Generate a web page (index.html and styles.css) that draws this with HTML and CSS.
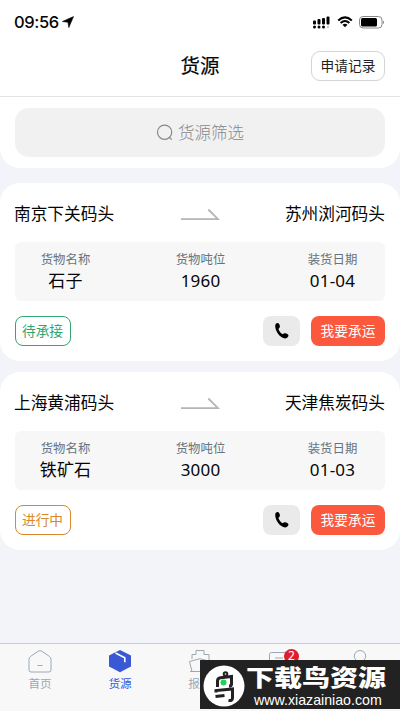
FILE: index.html
```html
<!DOCTYPE html>
<html lang="zh-CN">
<head>
<meta charset="utf-8">
<meta name="viewport" content="width=device-width, initial-scale=1">
<title>货源</title>
<link rel="stylesheet" href="styles.css">
</head>
<body>
<div class="app">
  <header class="top">
    <div class="status">
      <div class="clock"><span>09:56</span>
        <svg class="locate" viewBox="0 0 12 12"><path d="M11.500.6 6.800 11.600 6 6.300.4 5.500z" stroke="#000" stroke-width=".6"/></svg>
      </div>
      <div class="signals">
        <svg width="17" height="13" viewBox="0 0 17 13"><rect y="4.500" width="3" height="4" rx="1"/><rect x="4.500" y="3" width="3" height="5.500" rx="1"/><rect x="9" y="2" width="3" height="6.500" rx="1"/><rect x="13.500" y=".5" width="3" height="8" rx="1"/><circle cx="1.500" cy="11" r="1.500"/><circle cx="6" cy="11" r="1.500"/><circle cx="10.500" cy="11" r="1.500"/><circle cx="15" cy="11" r="1.200" fill="#ccc"/></svg>
        <svg width="16" height="12" viewBox="0 0 16 12"><path d="M1.200 4.500Q8-1.800 14.800 4.500M3.600 7Q8 3 12.400 7" fill="none" stroke="#000" stroke-width="2"/><path d="m5.500 8.700 2.500 2.600 2.500-2.600Q8 6.700 5.500 8.700z"/></svg>
        <svg width="26" height="13" viewBox="0 0 26 13"><rect x=".5" y=".5" width="22.500" height="11.500" rx="3.500" fill="#fff" stroke="#888"/><rect x="2" y="2" width="16" height="8.500" rx="1.500"/><path d="M24 4.500q2 1.800 0 3.600z" fill="#777"/></svg>
      </div>
    </div>
    <div class="titlebar">
      <h1>货源</h1>
      <button class="records">申请记录</button>
    </div>
  </header>

  <section class="search-panel">
    <div class="search">
      <svg width="18" height="18" viewBox="0 0 18 18" fill="none" stroke="#888" stroke-width="1.200"><circle cx="8.600" cy="8.200" r="7.100"/><path d="m13 13 2.800 2.600"/></svg>
      <span>货源筛选</span>
    </div>
  </section>

  <article class="card">
    <div class="route">
      <span>南京下关码头</span>
      <svg class="arrow" width="39" height="13" viewBox="0 0 39 13"><path d="M0 11.200h37L27.300 1.500"/></svg>
      <span>苏州浏河码头</span>
    </div>
    <dl class="facts">
      <div><dt>货物名称</dt><dd>石子</dd></div>
      <div><dt>货物吨位</dt><dd>1960</dd></div>
      <div><dt>装货日期</dt><dd>01-04</dd></div>
    </dl>
    <div class="actions">
      <span class="tag waiting">待承接</span>
      <button class="call"><svg width="16" height="18" viewBox="0 0 16 18"><path d="M1.200 3.800C1 2 3 .5 4.400 1.200c1.400 1 1.800 3 1.300 4.200-.6.8-1.300 1.100-1.100 1.800.5 2 2.100 3.800 3.700 4.900.7.4 1.100-.4 2-.8 1.300-.4 3.600.5 4.100 1.800.4 1.500-1.400 3.500-3.200 3.400C6 16.100 1.100 9.300 1.200 3.800z"/></svg></button>
      <button class="accept">我要承运</button>
    </div>
  </article>

  <article class="card">
    <div class="route">
      <span>上海黄浦码头</span>
      <svg class="arrow" width="39" height="13" viewBox="0 0 39 13"><path d="M0 11.200h37L27.300 1.500"/></svg>
      <span>天津焦炭码头</span>
    </div>
    <dl class="facts">
      <div><dt>货物名称</dt><dd>铁矿石</dd></div>
      <div><dt>货物吨位</dt><dd>3000</dd></div>
      <div><dt>装货日期</dt><dd>01-03</dd></div>
    </dl>
    <div class="actions">
      <span class="tag running">进行中</span>
      <button class="call"><svg width="16" height="18" viewBox="0 0 16 18"><path d="M1.200 3.800C1 2 3 .5 4.400 1.200c1.400 1 1.800 3 1.300 4.200-.6.8-1.300 1.100-1.100 1.800.5 2 2.100 3.800 3.700 4.900.7.4 1.100-.4 2-.8 1.300-.4 3.600.5 4.100 1.800.4 1.500-1.400 3.500-3.200 3.400C6 16.100 1.100 9.300 1.200 3.800z"/></svg></button>
      <button class="accept">我要承运</button>
    </div>
  </article>

  <nav class="tabs">
    <a class="tab"><svg viewBox="0 0 24 24"><path d="M2.800 7.200 10.500 2.100q1.500-.9 3 0l7.700 5.100q1.800 1.200 1.800 3V21q0 2-2 2H3q-2 0-2-2V10.200q0-1.800 1.800-3zM9.500 16.500h5"/></svg><span>首页</span></a>
    <a class="tab active"><svg viewBox="0 0 24 24"><path class="solid" d="M12 1 23 6.500v11L12 23.300 1 17.500v-11z"/><path class="band" d="m7.500 4 9.300 4.700v4.500"/></svg><span>货源</span></a>
    <a class="tab"><svg viewBox="0 0 24 24"><path d="M4 10V5.500h4V1.500h8v4h5V11M4 22.500 1.500 12.500l10.500-2.800 10.500 2.800L20 22.500H2"/></svg><span class="first">报</span></a>
    <a class="tab"><svg viewBox="0 0 24 24"><path d="M3.500 3.500h17q1.500 0 1.500 1.500v13h-9l-4 4v-4H1.500V5.500q0-2 2-2zM7 9h8"/></svg><b class="badge">2</b></a>
    <a class="tab"><svg viewBox="0 0 24 24"><circle cx="12" cy="7.200" r="5.700"/><path d="M2 22.500q0-9 10-9t10 9z"/></svg></a>
  </nav>
</div>

<aside class="watermark">
  <svg class="bird" width="42" height="42" viewBox="0 0 42 42"><circle cx="21" cy="21" r="20.500" fill="#fff"/><g fill="none" stroke="#222" stroke-width="3"><path d="M14.500 22v-6q0-3 3-3.300l11-1.200V19q0 2-2.500 2M13 27.500V25.500l16.500-1.500v9q0 3-4 2.500M12.500 31.500l9-1"/><circle cx="22.500" cy="9" r="1.800" stroke-width="2"/></g><circle cx="20.500" cy="17.500" r="3" fill="#1fd15b"/></svg>
  <div class="brand"><strong>下载鸟资源</strong><span>www.xiazainiao.com</span></div>
</aside>
</body>
</html>
```
FILE: styles.css
```css
* { box-sizing: border-box; }
body { margin: 0; font-family: "Noto Sans", "Noto Sans CJK SC", sans-serif; color: #050505; }
button { font: inherit; margin: 0; padding: 0; border: 0; }
svg { display: block; flex: none; }
.app { height: 711px; display: flex; flex-direction: column; background: #f2f4f9; overflow: hidden; }
.top { height: 97px; flex: none; background: #fff; border-bottom: 1px solid #e3e3e3; }
.status { height: 43px; padding: 1px 15px 0 14px; display: flex; justify-content: space-between; align-items: center; }
.clock { display: flex; align-items: center; gap: 3px; font: 500 16.500px/20px Inter, sans-serif; letter-spacing: -.35px; }
.locate { width: 12px; height: 12px; }
.signals { display: flex; align-items: center; gap: 6.500px; }
.titlebar { height: 46px; padding: 0 15px; display: grid; grid-template-columns: 1fr auto 1fr; align-items: center; }
h1 { grid-column: 2; margin: 0; font-size: 19.500px; line-height: 28px; font-weight: 400; -webkit-text-stroke: .2px #050505; }
.records { justify-self: end; width: 74px; height: 30px; border: 1px solid #d4d4d4; border-radius: 9px; background: #fff; font-size: 13.700px; line-height: 26px; color: #222; }
.search-panel { height: 71px; flex: none; padding: 11px 15px; background: #fff; border-radius: 0 0 20px 20px; }
.search { height: 49px; display: flex; align-items: center; justify-content: center; gap: 4px; border-radius: 14px; background: #f1f1f1; color: #888; font-size: 16.500px; font-weight: 300; line-height: 24px; }
.card { flex: none; height: 178px; margin-top: 15px; padding: 19px 15px 15px 14px; border-radius: 20px; background: #fff; }
.card + .card { margin-top: 11px; }
.route { height: 24px; display: grid; grid-template-columns: 1fr 39px 1fr; align-items: center; font-size: 16.700px; line-height: 24px; white-space: nowrap; }
.route span:last-child { text-align: right; }
.arrow { margin-left: 1px; }
.arrow path { fill: none; stroke: #b5b5b5; stroke-width: 1.800; }
.facts { height: 59px; margin: 16px 0 15px 1px; padding: 8px 2px 0 0; display: flex; justify-content: space-between; border-radius: 6px; background: #f7f7f8; text-align: center; }
.facts div { width: 101px; }
.facts div:nth-child(2) { padding-left: 3px; }
dt { font-size: 12.400px; line-height: 20px; color: #657480; }
dd { margin: 0; font-size: 17px; line-height: 21px; letter-spacing: .2px; }
.actions { height: 30px; margin-left: 1px; display: flex; align-items: center; }
.tag { width: 56px; height: 30px; border: 1px solid; border-radius: 8px; font-size: 13.700px; line-height: 27px; text-align: center; text-indent: -1px; }
.waiting { color: #32a66e; }
.running { color: #d88928; }
.call { width: 37px; height: 30px; margin: 0 11px 0 auto; display: grid; place-items: center; border-radius: 8px; background: #eaeaea; }
.accept { width: 74px; height: 30px; border-radius: 8px; background: #fb583d; color: #fff; font-size: 13.700px; line-height: 28px; }
.tabs { height: 68px; flex: none; margin-top: auto; padding-top: 5px; display: grid; grid-template-columns: repeat(5, 1fr); border-top: 1px solid #c5cad4; background: #f8f8f9; }
.tab { position: relative; display: flex; flex-direction: column; align-items: center; color: #9ba8b3; font-size: 11.600px; line-height: 20px; }
.tab svg { width: 24px; height: 24px; fill: none; stroke: #9ba8b3; stroke-width: 1; }
.tab span { margin-top: 1px; }
.tab .first { padding-right: 12px; }
.active { color: #3958d6; }
.tab .solid { fill: #3958d6; stroke: none; }
.tab .band { stroke: #fff; stroke-width: 1.600; }
.badge { position: absolute; left: 44px; top: 0; width: 15px; height: 15px; border-radius: 50%; background: #df1e2b; color: #fff; font-size: 12px; font-weight: 400; line-height: 13px; text-align: center; }
.watermark { position: absolute; left: 200px; top: 660px; width: 200px; height: 49px; padding: 2px 0 0 3px; display: flex; align-items: center; gap: 1px; background: #222; color: #fff; }
.brand { display: flex; flex-direction: column; white-space: nowrap; }
.brand strong { font-size: 28px; line-height: 26px; font-weight: 900; transform: scaleY(.8); }
.brand span { margin: 2px 0 0 8px; font: 14.200px/16px "Liberation Sans", sans-serif; }
```
